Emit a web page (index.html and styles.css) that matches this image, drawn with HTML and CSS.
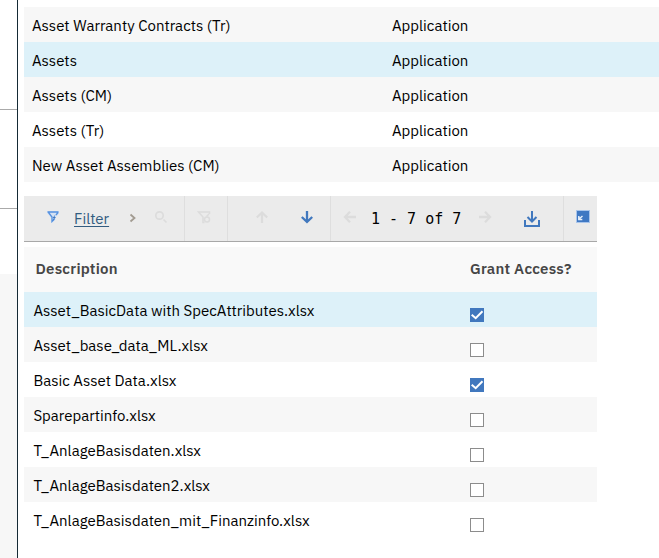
FILE: index.html
```html
<!DOCTYPE html>
<html lang="en">
<head>
<meta charset="utf-8">
<title>Applications</title>
<link rel="stylesheet" href="styles.css">
</head>
<body>
<div class="layout">
  <aside class="rail"><div class="rail-top"></div><div class="rail-middle"></div><div class="rail-space"></div><div class="rail-bottom"></div></aside>
  <main class="content">
    <section class="apps">
      <div class="row shaded"><span class="name">Asset Warranty Contracts (Tr)</span><span class="type">Application</span></div>
      <div class="row selected"><span class="name">Assets</span><span class="type">Application</span></div>
      <div class="row shaded"><span class="name">Assets (CM)</span><span class="type">Application</span></div>
      <div class="row"><span class="name">Assets (Tr)</span><span class="type">Application</span></div>
      <div class="row shaded"><span class="name">New Asset Assemblies (CM)</span><span class="type">Application</span></div>
    </section>
    <section class="files">
      <div class="toolbar">
        <div class="group filter-group">
          <svg class="funnel" width="14" height="14" viewBox="0 0 14 14"><path class="pale" d="M1 1h12v2.500L9.500 7.500v2L6 13H5V8L1 3z"/><path d="M1.500 2h11M2.500 2.500L6 7v4.500L8.500 9M12 2.500L10 5"/><path class="bolt" d="M9.500 4.500L6.500 8h1.300L6.500 11 10 7H8.500z"/></svg>
          <a class="filter">Filter</a>
          <svg class="chevron" width="8" height="10" viewBox="0 0 8 10"><path d="M1.500 1.500L5.500 5l-4 3.500"/></svg>
          <svg class="search off" width="14" height="14" viewBox="0 0 14 14"><circle cx="5.500" cy="5.500" r="3.700"/><path d="M9.500 9.500l3 3"/></svg>
        </div>
        <div class="group clear-group"><svg class="off" width="14" height="14" viewBox="0 0 14 14"><path d="M12.500 4V2H1.500L6 7v5.500h1.500M12 4L9.500 6.500"/><circle cx="10" cy="9.500" r="2.500"/></svg></div>
        <div class="group move-group">
          <svg class="off arrow" width="14" height="14" viewBox="0 0 14 14"><path d="M7 13V2.500M1.800 7.500l5.200-5 5.200 5"/></svg>
          <svg class="blue arrow" width="14" height="14" viewBox="0 0 14 14"><path d="M7 1v11M1.800 7L7 12l5.200-5"/></svg>
        </div>
        <div class="group page-group">
          <svg class="off arrow" width="14" height="14" viewBox="0 0 14 14"><path d="M13 7H2M7 1.800L2 7l5 5.200"/></svg>
          <span class="pages">1 - 7 of 7</span>
          <svg class="off arrow" width="14" height="14" viewBox="0 0 14 14"><path d="M1 7h11M7 1.800L12 7l-5 5.200"/></svg>
          <svg class="download" width="16" height="16" viewBox="0 0 16 16"><path d="M8 0v10M3.500 6L8 10.500 12.500 6M1 9v6h14V9"/></svg>
        </div>
        <div class="group detach-group"><svg width="14" height="13" viewBox="0 0 14 13"><path fill="#a9c5eb" d="M0 0h14v13H0z"/><path fill="#3f78c3" d="M1 1h12v11H1z"/><path fill="none" stroke="#e6effa" stroke-width="1.500" d="M2.800 6v3.500h3.500M3 9l3.500-3"/></svg></div>
      </div>
      <div class="head"><span class="h-desc">Description</span><span class="h-grant">Grant Access?</span></div>
      <div class="row selected"><span class="file">Asset_BasicData with SpecAttributes.xlsx</span><span class="box checked"><svg width="14" height="14" viewBox="0 0 14 14"><path d="M1.700 6.700l4 3.500L12.500 3.300"/></svg></span></div>
      <div class="row shaded"><span class="file">Asset_base_data_ML.xlsx</span><span class="box"></span></div>
      <div class="row"><span class="file">Basic Asset Data.xlsx</span><span class="box checked"><svg width="14" height="14" viewBox="0 0 14 14"><path d="M1.700 6.700l4 3.500L12.500 3.300"/></svg></span></div>
      <div class="row shaded"><span class="file">Sparepartinfo.xlsx</span><span class="box"></span></div>
      <div class="row"><span class="file">T_AnlageBasisdaten.xlsx</span><span class="box"></span></div>
      <div class="row shaded"><span class="file">T_AnlageBasisdaten2.xlsx</span><span class="box"></span></div>
      <div class="row"><span class="file">T_AnlageBasisdaten_mit_Finanzinfo.xlsx</span><span class="box"></span></div>
    </section>
  </main>
</div>
</body>
</html>
```
FILE: styles.css
```css
* { box-sizing: border-box; }
body { margin: 0; background: #fff; color: #000; font: 15px/20px "IBM Plex Sans", Roboto, "Liberation Sans", sans-serif; }
.layout { display: flex; height: 558px; overflow: hidden; }
.rail { display: flex; flex-direction: column; flex: none; width: 18px; border-right: 1px solid #152a35; }
.rail-top { height: 110px; border-bottom: 1px solid #aaa; }
.rail-middle { height: 99px; border-bottom: 1px solid #aaa; }
.rail-space { height: 65px; }
.rail-bottom { flex: 1; background: #f7f7f7; }
.content { flex: 1; min-width: 0; padding: 7px 0 0 6px; }
.row { display: flex; align-items: center; height: 35px; padding-top: 2px; white-space: nowrap; }
.shaded { background: #f7f7f7; }
.selected { background: #ddf1f9; }
.name { width: 368px; padding-left: 8px; }
.files { width: 573px; margin-top: 14px; }
.toolbar { display: flex; height: 46px; background: #ebebeb; border-bottom: 1px solid #a8a8a8; }
.group { display: flex; border-right: 1px solid #dedede; flex: none; }
svg { display: block; flex: none; fill: none; stroke-width: 2; }
.off { stroke: #dcdcdc; }
.blue { stroke: #4178be; }
.arrow { margin-top: 14px; stroke-width: 2.300; }
.filter-group { width: 161px; padding-left: 22px; }
.funnel { margin-top: 14px; stroke: #5591df; stroke-width: 1.300; }
.funnel .pale { stroke: none; fill: #d5e2f3; }
.funnel .bolt { stroke: none; fill: #3f78c3; }
.filter { margin: 13px 0 0 14px; width: 35px; color: #325c80; text-decoration: underline; text-underline-offset: 2px; white-space: nowrap; }
.chevron { margin: 17px 0 0 20px; stroke: #a29b91; stroke-width: 1.800; }
.search { margin: 14px 0 0 17px; stroke-width: 1.700; }
.clear-group { width: 43px; padding: 14px 0 0 12px; }
.clear-group svg { stroke-width: 1.500; }
.move-group { width: 103px; padding-left: 27px; gap: 31px; }
.page-group { width: 233px; padding-left: 12px; }
.pages { width: 91px; margin: 13px 16px 0 14px; font-family: "DejaVu Sans Mono", monospace; white-space: pre; }
.download { margin: 15px 0 0 32px; stroke: #4178be; }
.detach-group { flex: 1; border: 0; padding: 14px 0 0 12px; }
.head { display: flex; align-items: center; height: 45px; margin-top: 5px; padding: 0 0 2px 11.500px; background: #f9f9f9; color: #464646; font-weight: 600; letter-spacing: 0.220px; }
.h-desc { width: 434.500px; }
.file { width: 446px; padding-left: 9.400px; }
.files .row { padding-top: 3px; }
.box { width: 14px; height: 14px; margin-top: 8px; border: 1px solid #8c8c8c; background: #fff; }
.checked { border: 0; background: #4178be; }
.checked svg { stroke: #fff; }
```
